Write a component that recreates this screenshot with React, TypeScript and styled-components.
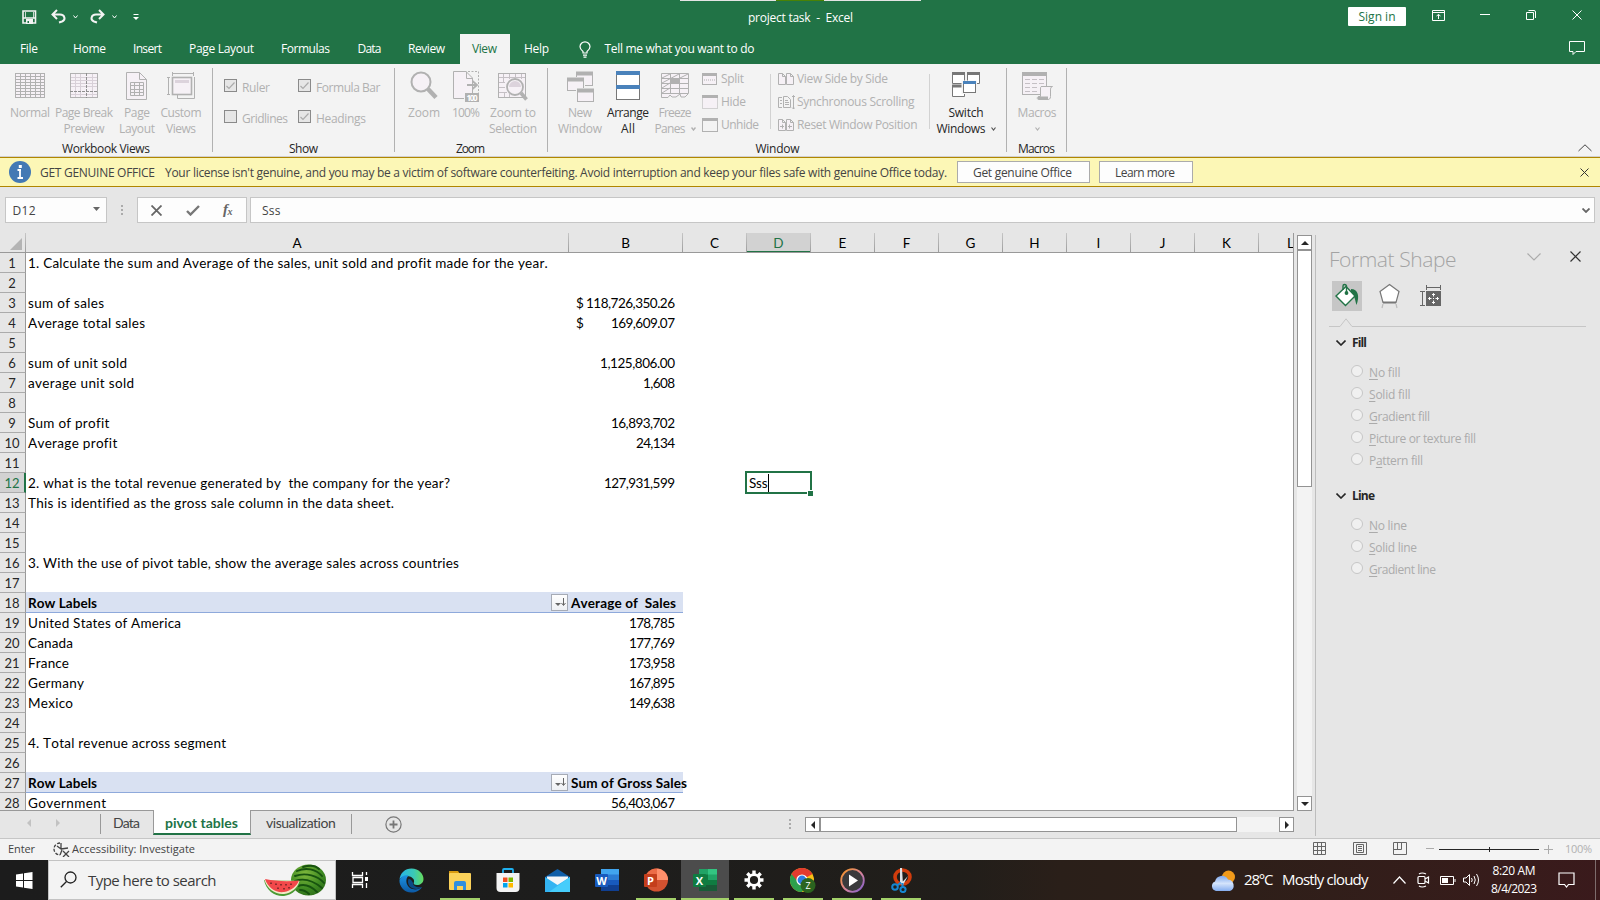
import React, { useLayoutEffect, useRef } from "react";
import styled, { createGlobalStyle, css } from "styled-components";

const GREEN = "#217346";
const UI = `"Open Sans", "Noto Sans", sans-serif`;
const CELL = `Lato, "Open Sans", sans-serif`;

const Global = createGlobalStyle`
  * { box-sizing: border-box; }
  body { margin: 0; background: #e6e6e6; font-family: ${UI}; font-size: 12px; color: #262626; overflow: hidden; }
  svg { display: block; flex: none; }
`;

/* ---------- text tracked to a fixed measure ---------- */
const Tracked = styled.span<{ $w: number; $ml?: number }>`
  display: block;
  flex: none;
  width: ${(p) => p.$w}px;
  margin-left: ${(p) => p.$ml ?? 0}px;
  white-space: pre;
`;

function Fit({ w, ml, children }: { w: number; ml?: number; children: React.ReactNode }) {
  const ref = useRef<HTMLSpanElement>(null);
  useLayoutEffect(() => {
    const el = ref.current;
    if (!el) return;
    const apply = () => {
      el.style.letterSpacing = "0px";
      const range = document.createRange();
      range.selectNodeContents(el);
      const natural = range.getBoundingClientRect().width;
      const n = (el.textContent || "").length;
      if (n > 1) el.style.letterSpacing = `${((w - natural) / (n - 1)).toFixed(3)}px`;
    };
    apply();
    document.fonts?.ready.then(apply);
  }, [w]);
  return (
    <Tracked ref={ref} $w={w} $ml={ml}>
      {children}
    </Tracked>
  );
}

/* ---------- frame ---------- */
const Frame = styled.div`
  width: 1600px;
  height: 900px;
  display: flex;
  flex-direction: column;
  overflow: hidden;
`;

const Slot = styled.div<{ $ml?: number; $mt?: number }>`
  flex: none;
  margin-left: ${(p) => p.$ml ?? 0}px;
  margin-top: ${(p) => p.$mt ?? 0}px;
`;

/* ---------- title bar and tabs ---------- */
const TitleBar = styled.header`
  height: 34px;
  flex: none;
  background: ${GREEN};
  color: #fff;
  display: flex;
  position: relative;
  line-height: 18px;
`;
const TopStrip = styled.div`
  position: absolute;
  left: 680px;
  top: 0;
  width: 241px;
  height: 1px;
  background: linear-gradient(to right, #e4e4e4 96px, #498205 96px, #498205 144px, #e4e4e4 144px);
`;
const SignIn = styled.button`
  width: 58px;
  height: 19px;
  margin: 7px 0 0 495px;
  padding: 1px 0 0 10.5px;
  border: 0;
  border-radius: 1px;
  background: #fff;
  color: ${GREEN};
  font: 12px/18px ${UI};
  text-align: left;
`;
const TabBar = styled.nav`
  height: 30px;
  flex: none;
  background: ${GREEN};
  color: #fff;
  display: flex;
  line-height: 30px;
`;
const Tab = styled.div<{ $w: number; $pad: number; $active?: boolean }>`
  width: ${(p) => p.$w}px;
  padding-left: ${(p) => p.$pad}px;
  background: ${(p) => (p.$active ? "#f3f3f3" : "transparent")};
  color: ${(p) => (p.$active ? GREEN : "#fff")};
`;

/* ---------- ribbon ---------- */
const Ribbon = styled.section`
  height: 93px;
  flex: none;
  display: flex;
  background: #f3f3f3;
  border-bottom: 1px solid #d2d0ce;
  position: relative;
`;
const Group = styled.div<{ $w: number }>`
  width: ${(p) => p.$w}px;
  height: 84px;
  margin-top: 4px;
  border-right: 1px solid #b1b1b1;
  display: flex;
  flex-direction: column;
  flex: none;
`;
const GroupBody = styled.div`
  height: 72px;
  display: flex;
  flex: none;
`;
const GroupName = styled.div<{ $ml: number }>`
  line-height: 17px;
  padding-left: ${(p) => p.$ml}px;
`;
const BigButton = styled.div<{ $w: number; $ml?: number; $on?: boolean }>`
  width: ${(p) => p.$w}px;
  margin-left: ${(p) => p.$ml ?? 0}px;
  padding-top: 1px;
  display: flex;
  flex-direction: column;
  align-items: center;
  flex: none;
  line-height: 16px;
  color: ${(p) => (p.$on ? "#262626" : "#b1b1b1")};
  > svg:first-child { margin-bottom: 1px; }
`;
const LabelLine = styled.div`
  display: flex;
  align-items: center;
  gap: 5px;
  height: 16px;
`;
const Column = styled.div<{ $w: number; $ml?: number; $mt?: number; $gap?: number }>`
  width: ${(p) => p.$w}px;
  margin-left: ${(p) => p.$ml ?? 0}px;
  margin-top: ${(p) => p.$mt ?? 0}px;
  display: flex;
  flex-direction: column;
  gap: ${(p) => p.$gap ?? 0}px;
  flex: none;
`;
const SmallCommand = styled.div<{ $gap: number }>`
  height: 16px;
  line-height: 16px;
  display: flex;
  align-items: center;
  gap: ${(p) => p.$gap}px;
  color: #b1b1b1;
`;
const CheckCommand = styled(SmallCommand)`
  align-items: flex-start;
  line-height: 19px;
`;
const CheckBox = styled.span`
  width: 13px;
  height: 13px;
  border: 1px solid #8a8a8a;
  background: #e6e6e6;
  flex: none;
  margin-top: 1px;
`;
const InnerRule = styled.div<{ $ml: number }>`
  width: 1px;
  height: 55px;
  margin: 6px 0 0 ${(p) => p.$ml}px;
  background: #d2d2d2;
  flex: none;
`;
const Collapse = styled.div`
  margin: 80px 0 0 511px;
`;

/* ---------- message bar ---------- */
const MessageBar = styled.section`
  height: 30px;
  flex: none;
  background: #fcf7b6;
  border: solid #b08600;
  border-width: 1px 0;
  display: flex;
  color: #444;
  line-height: 30px;
`;
const MessageButton = styled.button<{ $w: number; $ml: number; $pad: number }>`
  width: ${(p) => p.$w}px;
  height: 22px;
  margin: 3px 0 0 ${(p) => p.$ml}px;
  padding: 1px 0 0 ${(p) => p.$pad}px;
  border: 1px solid #ababab;
  background: #fdfdfd;
  color: #444;
  font: 12px/20px ${UI};
  text-align: left;
`;

/* ---------- formula bar ---------- */
const FormulaBar = styled.section`
  height: 46px;
  padding: 10px 0 0 5px;
  display: flex;
  flex: none;
`;
const Field = styled.div<{ $w: number; $ml?: number; $pad?: number }>`
  width: ${(p) => p.$w}px;
  height: 26px;
  margin-left: ${(p) => p.$ml ?? 0}px;
  padding-left: ${(p) => p.$pad ?? 0}px;
  border: 1px solid #c6c6c6;
  background: #fdfdfd;
  line-height: 25px;
  color: #444;
  display: flex;
  flex: none;
`;

/* ---------- workspace ---------- */
const Workspace = styled.main`
  height: 606px;
  display: flex;
  flex: none;
  border-bottom: 1px solid #c6c6c6;
`;
const BookArea = styled.div`
  width: 1316px;
  display: flex;
  flex-direction: column;
  flex: none;
`;
const SheetRow = styled.div`
  display: flex;
  height: 578px;
`;
const Sheet = styled.div`
  width: 1294px;
  border-right: 1px solid #999;
  border-bottom: 1px solid #999;
  background: #fff;
  display: flex;
  flex-direction: column;
  overflow: hidden;
  flex: none;
  font: 13.5px/20px ${CELL};
  font-kerning: none;
  color: #000;
`;
const ColumnHeads = styled.div`
  height: 20px;
  width: 1293px;
  background: #e6e6e6;
  border-bottom: 1px solid #999;
  display: flex;
  flex: none;
  overflow: hidden;
`;
const ColumnHead = styled.div<{ $w: number; $on?: boolean }>`
  width: ${(p) => p.$w}px;
  height: 20px;
  flex: none;
  text-align: center;
  line-height: 20px;
  border-right: 1px solid;
  border-image: linear-gradient(#c8c8c8, #999) 1;
  ${(p) =>
    p.$on &&
    css`
      background: #d2d2d2;
      color: ${GREEN};
      box-shadow: inset 0 -2px ${GREEN};
    `}
`;
const Line = styled.div`
  height: 20px;
  display: flex;
  flex: none;
`;
const RowHead = styled.div<{ $on?: boolean }>`
  width: 26px;
  height: 20px;
  flex: none;
  text-align: center;
  font-size: 13px;
  line-height: 21px;
  padding-right: ${(p) => (p.$on ? 0 : 1)}px;
  background: ${(p) => (p.$on ? "#d2d2d2" : "#e6e6e6")};
  color: ${(p) => (p.$on ? GREEN : "#262626")};
  border-right: ${(p) => (p.$on ? `2px solid ${GREEN}` : "1px solid #999")};
  border-bottom: 1px solid #ababab;
`;
const Cell = styled.div<{ $w: number; $head?: boolean; $right?: boolean }>`
  width: ${(p) => p.$w}px;
  height: 20px;
  flex: none;
  display: flex;
  line-height: 21px;
  justify-content: ${(p) => (p.$right ? "flex-end" : "flex-start")};
  padding: ${(p) => (p.$right ? "0 7px 0 0" : "0 0 0 2px")};
  font-variant-numeric: tabular-nums;
  ${(p) =>
    p.$head &&
    css`
      margin-top: -1px;
      padding-top: 1px;
      height: 21px;
      background: #d9e1f2;
      border-bottom: 1px solid #8ea9db;
      font-weight: 700;
    `}
`;
const SortButton = styled.div<{ $ml: number }>`
  width: 17px;
  height: 17px;
  margin: 1px 0 0 ${(p) => p.$ml}px;
  border: 1px solid #a6abb5;
  background: linear-gradient(#fefefe, #eef0f4);
`;
const EditCell = styled.div`
  position: relative;
  width: 67px;
  height: 23px;
  margin: -2px 0 0 63px;
  padding: 0 0 0 2px;
  border: 2px solid ${GREEN};
  background: #fff;
  display: flex;
  line-height: 21px;
`;
const Caret = styled.span`
  width: 1px;
  height: 18px;
  margin-top: 1px;
  background: #000;
`;
const FillHandle = styled.span`
  position: absolute;
  right: -3px;
  bottom: -4px;
  width: 6px;
  height: 6px;
  background: ${GREEN};
  border: solid #fff;
  border-width: 1px 0 0 1px;
`;
const VScroll = styled.div`
  width: 15px;
  height: 576px;
  margin: 2px 0 0 3px;
  background: #f3f3f3;
  display: flex;
  flex-direction: column;
  flex: none;
`;
const ScrollButton = styled.div`
  width: 15px;
  height: 15px;
  border: 1px solid #939393;
  background: #fff;
  flex: none;
  display: flex;
  align-items: center;
  justify-content: center;
`;
const VThumb = styled.div`
  height: 237px;
  margin-bottom: auto;
  border: 1px solid #939393;
  background: #fff;
`;
const PaneEdge = styled.div`
  width: 1px;
  height: 601px;
  margin: 2px 0 0 -1px;
  background: #bdbdbd;
  flex: none;
`;
const SheetTabs = styled.div`
  height: 27px;
  display: flex;
  flex: none;
  font: 14px/24px ${CELL};
  color: #444;
`;
const TabRule = styled.div<{ $ml: number }>`
  width: 1px;
  height: 20px;
  margin: 3px 0 0 ${(p) => p.$ml}px;
  background: #999;
  flex: none;
`;
const ActiveSheet = styled.div`
  width: 98px;
  height: 25px;
  margin: -1px 0 0 13px;
  padding-left: 11px;
  background: #fff;
  border: solid #999;
  border-width: 0 1px 0 1px;
  border-bottom: 2px solid ${GREEN};
  color: ${GREEN};
  font-weight: 700;
  line-height: 26px;
  flex: none;
`;
const HTrack = styled.div`
  width: 489px;
  height: 15px;
  margin: 6px 0 0 14px;
  background: #f3f3f3;
  display: flex;
  flex: none;
`;
const HThumb = styled.div`
  width: 417px;
  height: 15px;
  margin-right: auto;
  border: 1px solid #939393;
  background: #fff;
`;

/* ---------- format pane ---------- */
const Pane = styled.aside`
  width: 284px;
  display: flex;
  flex-direction: column;
  padding-left: 13px;
`;
const PaneTitle = styled.div`
  height: 48px;
  display: flex;
  font-size: 21px;
  font-weight: 300;
  line-height: 52px;
  color: #a3a3a3;
`;
const PaneTools = styled.div`
  display: flex;
  height: 30px;
  padding-left: 3px;
`;
const ToolBox = styled.div<{ $on?: boolean; $ml?: number }>`
  width: 30px;
  height: 30px;
  margin-left: ${(p) => p.$ml ?? 0}px;
  background: ${(p) => (p.$on ? "#c6c6c6" : "transparent")};
`;
const SectionHead = styled.div<{ $mt: number }>`
  display: flex;
  align-items: center;
  height: 16px;
  margin-top: ${(p) => p.$mt}px;
  padding-left: 7px;
  font-weight: 700;
  line-height: 16px;
`;
const Options = styled.div`
  margin-top: 12px;
  padding-left: 22px;
`;
const Option = styled.div`
  display: flex;
  height: 22px;
  line-height: 20px;
  color: #ababab;
  u { text-underline-offset: 2px; text-decoration-thickness: 1px; }
`;
const Radio = styled.span`
  width: 12px;
  height: 12px;
  margin-top: 2px;
  border: 1px solid #c6c6c6;
  border-radius: 50%;
  background: #f0f0f0;
`;

/* ---------- status bar ---------- */
const StatusBar = styled.footer`
  height: 21px;
  flex: none;
  background: #f3f3f3;
  display: flex;
  font-size: 11px;
  line-height: 20px;
  color: #444;
`;
const Faded = styled.span`
  color: #b1b1b1;
`;

/* ---------- taskbar ---------- */
const TaskBar = styled.div`
  height: 40px;
  flex: none;
  display: flex;
  background: linear-gradient(to right, #1c1c1c 0, #1d1d1c 600px, #211e1a 960px, #2a1f19 1060px, #2e1f19 1250px, #371c1b 1500px, #3a1a1c 1600px);
  color: #fff;
`;
const SearchBox = styled.div`
  width: 288px;
  height: 40px;
  border: 1px solid #c3c3c3;
  background: #f3f3f3;
  color: #3b3b3b;
  display: flex;
  font-size: 15px;
  line-height: 38px;
  flex: none;
`;
const TaskButton = styled.div<{ $w: number; $ml?: number; $line?: boolean; $on?: boolean }>`
  width: ${(p) => p.$w}px;
  height: 40px;
  margin-left: ${(p) => p.$ml ?? 0}px;
  display: flex;
  align-items: center;
  justify-content: center;
  flex: none;
  background: ${(p) => (p.$on ? "#4c4c4c" : "transparent")};
  box-shadow: ${(p) => (p.$line ? "inset 0 -2px #a3d16a" : "none")};
`;
const Weather = styled.div`
  display: flex;
  font-size: 15px;
  line-height: 39px;
`;
const Clock = styled.div`
  width: 48px;
  margin-left: 10px;
  padding-top: 2px;
  display: flex;
  flex-direction: column;
  align-items: center;
  line-height: 18px;
`;
const ShowDesktop = styled.div`
  width: 1px;
  height: 40px;
  margin-left: 20px;
  background: #7d6c6c;
`;

/* ---------- small icons ---------- */
type IcoProps = { w: number; h: number; c?: string; sw?: number; children: React.ReactNode };
const Ico = ({ w, h, c = "currentColor", sw = 1, children }: IcoProps) => (
  <svg width={w} height={h} viewBox={`0 0 ${w} ${h}`} fill="none" stroke={c} strokeWidth={sw}>
    {children}
  </svg>
);
const Cross = ({ s = 10, c = "currentColor", sw = 1 }: { s?: number; c?: string; sw?: number }) => (
  <Ico w={s} h={s} c={c} sw={sw}>
    <path d={`M.5 .5L${s - 0.5} ${s - 0.5}M${s - 0.5} .5L.5 ${s - 0.5}`} />
  </Ico>
);
const Chev = ({ w = 5, h = 3, c = "currentColor", sw = 1 }: { w?: number; h?: number; c?: string; sw?: number }) => (
  <Ico w={w} h={h + 1} c={c} sw={sw}>
    <path d={`M.5 .5L${w / 2} ${h}L${w - 0.5} .5`} />
  </Ico>
);
const Arrow = ({ dir, c = "#262626" }: { dir: "u" | "d" | "l" | "r"; c?: string }) => {
  const d = { u: "M4 2L8 6H0Z", d: "M0 2H8L4 6Z", l: "M2 4L6 0V8Z", r: "M6 4L2 0V8Z" }[dir];
  return (
    <svg width="8" height="8" viewBox="0 0 8 8">
      <path d={d} fill={c} />
    </svg>
  );
};

const G = "#b1b1b1";
const F = "#f6f1f6";

/* Ribbon drawings share a 32 x 35 canvas */
const Big = ({ children }: { children: React.ReactNode }) => (
  <svg width="32" height="35" viewBox="0 0 32 35" fill="none" stroke={G} strokeWidth="1">
    {children}
  </svg>
);
const NormalIcon = () => (
  <Big>
    <rect x="1.5" y="4.5" width="29" height="24" fill={F} />
    <path d="M6.5 4V28M11.5 4V28M16.5 4V28M21.5 4V28M26.5 4V28M1 7.5H30M1 10.5H30M1 13.5H30M1 16.5H30M1 19.5H30M1 22.5H30M1 25.5H30" />
  </Big>
);
const PageBreakIcon = () => (
  <Big>
    <rect x="2.5" y="4.5" width="27" height="24" fill={F} />
    <path stroke="#d8d0d8" d="M7.5 5V28M12.5 5V28M24.5 5V28M3 8.5H29M3 11.5H29M3 14.5H29M3 17.5H29M3 25.5H29" />
    <path stroke="#8f8f8f" strokeDasharray="3 1" d="M18.5 4V29M2 22.5H30" />
  </Big>
);
const PageLayoutIcon = () => (
  <Big>
    <path d="M5.5 3.5H18.5L25.5 10.5V30.5H5.5Z" fill={F} />
    <path d="M18.5 3.5V10.5H25.5M9.5 13.5H22.5V26.5H9.5ZM13.5 13.5V26.5M18.5 13.5V26.5M9.5 16.5H22.5M9.5 20.5H22.5M9.5 23.5H22.5" />
  </Big>
);
const CustomIcon = () => (
  <Big>
    <path d="M7.5 4.5H28.5M7.5 3V7M28.5 3V7M3.5 8.5V25.5M2 8.5H5M2 25.5H5M29.5 8V29.5H12.5V26" />
    <rect x="7.5" y="8.5" width="19" height="17" fill={F} strokeWidth="1.6" />
    <rect x="10" y="11" width="14" height="3" fill="#dcd3dc" stroke="none" />
  </Big>
);
const ZoomIcon = () => (
  <Big>
    <circle cx="13" cy="13" r="9.5" fill={F} strokeWidth="2" />
    <path d="M20 20L28 28.5" strokeWidth="4.5" />
  </Big>
);
const HundredIcon = () => (
  <Big>
    <path d="M14 29.5H3.5V2.5H16L22.5 9V24" fill={F} />
    <path d="M16.5 2.5V9.5H22.5" />
    <path d="M18 2.5H28.5V24" strokeDasharray="2 1.5" />
    <path d="M17 16H26M22.5 12L27 16L22.5 20" strokeWidth="1.8" />
    <rect x="15" y="24" width="14" height="9" fill={G} stroke="none" />
    <text x="16.5" y="31.5" fontSize="8" fontWeight="700" fill="#fff" stroke="none" textLength="11">100</text>
  </Big>
);
const ZoomSelIcon = () => (
  <Big>
    <rect x="1.5" y="4.5" width="27" height="24" fill={F} />
    <path d="M6.5 5V14M12.5 5V10M18.5 5V9M24.5 5V10M2 8.5H28M2 13.5H8M2 18.5H8M2 23.5H10M7.5 23V28M12.5 25V28" stroke="#c5c0c5" />
    <circle cx="18" cy="18" r="8" fill={F} strokeWidth="1.8" />
    <path d="M12 18A6 6 0 0 1 24 18Z" fill="#dcd3dc" stroke="none" />
    <path d="M24 24L29.5 30.5" strokeWidth="3.6" />
  </Big>
);
const NewWindowIcon = () => (
  <Big>
    <rect x="12.5" y="4.5" width="16" height="12" fill={F} />
    <path d="M12 4.5H29" strokeWidth="4" />
    <rect x="2" y="8" width="19" height="15" fill="#f3f3f3" stroke="none" />
    <rect x="3.5" y="9.5" width="16" height="12" fill={F} />
    <path d="M3 10.5H20" strokeWidth="4" />
    <rect x="12" y="19" width="19" height="14" fill="#f3f3f3" stroke="none" />
    <rect x="13.5" y="20.5" width="16" height="12" fill={F} />
    <path d="M13 21.5H30" strokeWidth="4" />
  </Big>
);
const ArrangeIcon = () => (
  <Big>
    <rect x="4.5" y="3.5" width="23" height="27" fill="#fff" stroke="#777" />
    <path d="M4 4H28M4 18H28" stroke="#4a82bb" strokeWidth="4" />
  </Big>
);
const FreezeIcon = () => (
  <Big>
    <path d="M2.5 4.5H29.5V24.5L26 28H22L21 25L17 28H13L11 26L9 28.5H2.5Z" fill={F} />
    <path d="M11.5 5V25M20.5 5V25M3 9.5H29M3 14.5H29M3 19.5H29M3 24.5H29M3 9L11 5M3 14L20 5M3 19L11 14M3 24L11 19M21 9L29 5" />
    <rect x="12" y="10" width="8" height="4" fill={G} stroke="none" />
  </Big>
);
const SwitchIcon = () => (
  <Big>
    <path d="M2.5 4.5H14.5V14.5H2.5ZM17.5 4.5H29.5V14.5H17.5ZM2.5 17.5H14.5V27.5H2.5Z" fill="#fff" stroke="#777" />
    <path d="M2 4.5H15M17 4.5H30M2 17H15" stroke="#777" strokeWidth="3" />
    <rect x="11.5" y="11.5" width="15.5" height="13.5" fill="#f3f3f3" stroke="none" />
    <rect x="13.5" y="13.5" width="12" height="10" fill="#fff" stroke="#777" />
    <path d="M13 13.5H26" stroke="#4a82bb" strokeWidth="3" />
  </Big>
);
const MacrosIcon = () => (
  <Big>
    <rect x="1.5" y="4.5" width="24" height="21" fill={F} />
    <path d="M1 5H26" strokeWidth="4" />
    <path d="M4 10.5H9M11 10.5H16M18 10.5H23M4 14.5H9M11 14.5H16M18 14.5H23M4 18.5H9M11 18.5H16M4 22.5H9M11 22.5H16" stroke="#c5c0c5" />
    <path d="M20 17.5H31.5C29.5 18 29.5 20 29.5 21V27.5C29.5 30 28 30.5 27 30.5H18C16 30.5 15.5 28.5 17.5 27.5H19.5V19C19.5 18 20 17.5 21 17.5" fill={F} />
    <path d="M17 29H27" strokeWidth="3" />
  </Big>
);

const PairIcon = ({ kind }: { kind: "view" | "sync" | "reset" }) => (
  <Ico w={17} h={15} c={G}>
    {kind === "sync" ? (
      <path d="M4 12.5H.5V2.5H4M5.5 1.5H9.5L12.5 4.5V12.5H5.5ZM7 5.5H10M7 7.5H11M7 9.5H11M2 5.5H4M2 8.5H4M15.5 .5V14M14 2L15.5 .5L17 2M14 12.5L15.5 14L17 12.5" />
    ) : (
      <>
        <path d="M.5 1.5H4.5L7.5 4.5V12.5H.5ZM8.5 1.5H12.5L15.5 4.5V12.5H8.5ZM4.5 1.5V4.5H7.5M12.5 1.5V4.5H15.5" fill={F} />
        {kind === "reset" && <path d="M2 8.5H6M10 8.5H14M4.5 6.5V10.5M11.5 6.5V10.5" />}
      </>
    )}
  </Ico>
);

/* ---------- sheet content ---------- */
type RowData = { a?: [string, number]; b?: [string, number]; cur?: boolean; head?: boolean };
const ROWS: RowData[] = [
  { a: ["1. Calculate the sum and Average of the sales, unit sold and profit made for the year.", 519.5] },
  {},
  { a: ["sum of sales", 76], b: ["118,726,350.26", 89], cur: true },
  { a: ["Average total sales", 117], b: ["169,609.07", 64], cur: true },
  {},
  { a: ["sum of unit sold", 99], b: ["1,125,806.00", 75] },
  { a: ["average unit sold", 106], b: ["1,608", 32] },
  {},
  { a: ["Sum of profit", 81], b: ["16,893,702", 64] },
  { a: ["Average profit", 89], b: ["24,134", 39] },
  {},
  { a: ["2. what is the total revenue generated by  the company for the year?", 422], b: ["127,931,599", 71] },
  { a: ["This is identified as the gross sale column in the data sheet.", 366] },
  {},
  {},
  { a: ["3. With the use of pivot table, show the average sales across countries", 431] },
  {},
  { a: ["Row Labels", 69], b: ["Average of  Sales", 105], head: true },
  { a: ["United States of America", 153], b: ["178,785", 46] },
  { a: ["Canada", 45], b: ["177,769", 46] },
  { a: ["France", 41], b: ["173,958", 46] },
  { a: ["Germany", 56], b: ["167,895", 46] },
  { a: ["Mexico", 45], b: ["149,638", 46] },
  {},
  { a: ["4. Total revenue across segment", 198] },
  {},
  { a: ["Row Labels", 69], b: ["Sum of Gross Sales", 116], head: true },
  { a: ["Government", 78], b: ["56,403,067", 64] },
];
const COLS: [string, number][] = [
  ["A", 543], ["B", 114], ["C", 64], ["D", 64], ["E", 64], ["F", 64],
  ["G", 64], ["H", 64], ["I", 64], ["J", 64], ["K", 64], ["L", 64],
];
const TABS: [string, number, number, number][] = [
  ["File", 53, 20, 18], ["Home", 60, 20, 33], ["Insert", 57, 20, 29], ["Page Layout", 91, 19, 65],
  ["Formulas", 77, 20, 49], ["Data", 51, 19.5, 24], ["Review", 71, 19, 37], ["View", 50, 12, 25], ["Help", 68, 14, 25],
];

function SheetLine({ row, n }: { row: RowData; n: number }) {
  const on = n === 12;
  return (
    <Line>
      <RowHead $on={on}>{n}</RowHead>
      {row.head ? (
        <>
          <Cell $w={543} $head>
            <Fit w={row.a![1]}>{row.a![0]}</Fit>
            <SortButton $ml={454}>
              <Ico w={15} h={15} c="#666">
                <path d="M11.5 3V10M9.5 8L11.5 10.5L13.5 8" />
                <path d="M3 8H9L6 11Z" fill="#666" stroke="none" />
              </Ico>
            </SortButton>
          </Cell>
          <Cell $w={114} $head>
            <Fit w={row.b![1]}>{row.b![0]}</Fit>
          </Cell>
        </>
      ) : (
        <>
          <Cell $w={543}>{row.a && <Fit w={row.a[1]}>{row.a[0]}</Fit>}</Cell>
          {row.b && (
            <Cell $w={113} $right>
              {row.cur && <Fit w={7}>$</Fit>}
              <Fit w={row.b[1]} ml={row.cur ? 92 - row.b[1] : 0}>{row.b[0]}</Fit>
            </Cell>
          )}
          {on && (
            <EditCell>
              <Fit w={18.5}>Sss</Fit>
              <Caret />
              <FillHandle />
            </EditCell>
          )}
        </>
      )}
    </Line>
  );
}

function Check({ on }: { on?: boolean }) {
  return (
    <CheckBox>
      {on && <Ico w={11} h={11} c="#ababab" sw={1.2}><path d="M1.5 6L4 8.5L9.5 2.5" /></Ico>}
    </CheckBox>
  );
}

function RibbonView() {
  return (
    <Ribbon>
      <Group $w={213}>
        <GroupBody>
          <BigButton $w={42} $ml={9}><NormalIcon /><Fit w={40}>Normal</Fit></BigButton>
          <BigButton $w={60} $ml={3}><PageBreakIcon /><Fit w={58}>Page Break</Fit><Fit w={41}>Preview</Fit></BigButton>
          <BigButton $w={40} $ml={3}><PageLayoutIcon /><Fit w={26}>Page</Fit><Fit w={36}>Layout</Fit></BigButton>
          <BigButton $w={44} $ml={2}><CustomIcon /><Fit w={41}>Custom</Fit><Fit w={30}>Views</Fit></BigButton>
        </GroupBody>
        <GroupName $ml={62}><Fit w={88}>Workbook Views</Fit></GroupName>
      </Group>
      <Group $w={182}>
        <GroupBody>
          <Column $w={74} $ml={11} $mt={10} $gap={15}>
            <CheckCommand $gap={5}><Check on /><Fit w={28}>Ruler</Fit></CheckCommand>
            <CheckCommand $gap={5}><Check /><Fit w={46}>Gridlines</Fit></CheckCommand>
          </Column>
          <Column $w={90} $mt={10} $gap={15}>
            <CheckCommand $gap={5}><Check on /><Fit w={64.5}>Formula Bar</Fit></CheckCommand>
            <CheckCommand $gap={5}><Check on /><Fit w={50}>Headings</Fit></CheckCommand>
          </Column>
        </GroupBody>
        <GroupName $ml={76}><Fit w={29}>Show</Fit></GroupName>
      </Group>
      <Group $w={153}>
        <GroupBody>
          <BigButton $w={36} $ml={11}><ZoomIcon /><Fit w={32}>Zoom</Fit></BigButton>
          <BigButton $w={36} $ml={6}><HundredIcon /><Fit w={28}>100%</Fit></BigButton>
          <BigButton $w={52} $ml={3}><ZoomSelIcon /><Fit w={46}>Zoom to</Fit><Fit w={48}>Selection</Fit></BigButton>
        </GroupBody>
        <GroupName $ml={61}><Fit w={29}>Zoom</Fit></GroupName>
      </Group>
      <Group $w={459}>
        <GroupBody>
          <BigButton $w={48} $ml={8}><NewWindowIcon /><Fit w={24}>New</Fit><Fit w={44}>Window</Fit></BigButton>
          <BigButton $w={44} $ml={2} $on><ArrangeIcon /><Fit w={42}>Arrange</Fit><Fit w={14}>All</Fit></BigButton>
          <BigButton $w={46} $ml={2}>
            <FreezeIcon /><Fit w={33}>Freeze</Fit>
            <LabelLine><Fit w={31}>Panes</Fit><Chev c={G} sw={1.4} /></LabelLine>
          </BigButton>
          <Column $w={64} $ml={4} $mt={3} $gap={7}>
            <SmallCommand $gap={3}>
              <Ico w={16} h={13} c={G}><rect x=".5" y=".5" width="14" height="11" fill={F} /><path d="M0 1.5H15" strokeWidth="3" /><path d="M2 7H13" strokeDasharray="1 1" /></Ico>
              <Fit w={23}>Split</Fit>
            </SmallCommand>
            <SmallCommand $gap={3}>
              <Ico w={16} h={15} c={G}><rect x=".5" y=".5" width="15" height="13" fill={F} strokeDasharray="1 1" /><path d="M0 1.5H16" strokeWidth="3" /></Ico>
              <Fit w={25}>Hide</Fit>
            </SmallCommand>
            <SmallCommand $gap={3}>
              <Ico w={16} h={14} c={G}><rect x=".5" y=".5" width="15" height="13" fill="#f3f3f3" /><path d="M0 1.5H16" strokeWidth="3" /></Ico>
              <Fit w={38}>Unhide</Fit>
            </SmallCommand>
          </Column>
          <InnerRule $ml={4} />
          <Column $w={150} $ml={7} $mt={3} $gap={7}>
            <SmallCommand $gap={2}><PairIcon kind="view" /><Fit w={91}>View Side by Side</Fit></SmallCommand>
            <SmallCommand $gap={2}><PairIcon kind="sync" /><Fit w={117.5}>Synchronous Scrolling</Fit></SmallCommand>
            <SmallCommand $gap={2}><PairIcon kind="reset" /><Fit w={120.5}>Reset Window Position</Fit></SmallCommand>
          </Column>
          <InnerRule $ml={1} />
          <BigButton $w={68} $ml={2} $on>
            <SwitchIcon /><Fit w={35}>Switch</Fit>
            <LabelLine><Fit w={49}>Windows</Fit><Chev c="#555" sw={1.2} /></LabelLine>
          </BigButton>
        </GroupBody>
        <GroupName $ml={207.5}><Fit w={44}>Window</Fit></GroupName>
      </Group>
      <Group $w={60}>
        <GroupBody>
          <BigButton $w={60}><MacrosIcon /><Fit w={39}>Macros</Fit><LabelLine><Chev c={G} sw={1.2} /></LabelLine></BigButton>
        </GroupBody>
        <GroupName $ml={11}><Fit w={37}>Macros</Fit></GroupName>
      </Group>
      <Collapse><Ico w={14} h={8} c="#444"><path d="M.5 7L7 .8L13.5 7" /></Ico></Collapse>
    </Ribbon>
  );
}

function FormatPane() {
  const fill = [["", "N", "o fill", 31.5], ["", "S", "olid fill", 41.5], ["", "G", "radient fill", 61], ["", "P", "icture or texture fill", 107], ["P", "a", "ttern fill", 54]] as const;
  const line = [["", "N", "o line", 38], ["", "S", "olid line", 48], ["", "G", "radient line", 67]] as const;
  const render = (o: readonly [string, string, string, number]) => (
    <Option key={o[1] + o[2]}>
      <Radio />
      <Fit w={o[3]} ml={6}>{o[0]}<u>{o[1]}</u>{o[2]}</Fit>
    </Option>
  );
  return (
    <Pane>
      <PaneTitle>
        <Fit w={127.5}>Format Shape</Fit>
        <Slot $ml={70.5} $mt={20}><Chev w={14} h={7} c="#ababab" sw={1.2} /></Slot>
        <Slot $ml={29} $mt={18}><Cross s={11} c="#333" sw={1.2} /></Slot>
      </PaneTitle>
      <PaneTools>
        <ToolBox $on>
          <Ico w={30} h={30} c={GREEN} sw={1.4}>
            <path d="M19 8C26 8 28 15 24.5 24C23 19 23 15 19 12Z" fill={GREEN} stroke="none" />
            <path d="M14 5.5L23 15L13.5 24.5L4 15Z" fill="#fff" />
            <path d="M11 9V5C11 3 14 3 14.5 5V11" />
            <circle cx="14.5" cy="12" r="1.2" fill={GREEN} />
          </Ico>
        </ToolBox>
        <ToolBox $ml={10}>
          <Ico w={30} h={30} c="#777" sw={1.2}>
            <path d="M17.5 3.5L27 10.5L24 21.5H11L8 10.5Z" fill="#fff" />
            <path d="M11 21.5H24" strokeWidth="2" />
            <path d="M11 23L10 27M24 23L25 27" stroke="#bbb" />
          </Ico>
        </ToolBox>
        <ToolBox $ml={14}>
          <Ico w={30} h={30} c="#666">
            <path d="M10.5 6.5H24.5M10.5 4V9M24.5 4V9M6.5 10.5V24.5M4 10.5H9M4 24.5H9" />
            <rect x="10.5" y="10.5" width="14" height="14" fill="#666" />
            <path d="M12.5 17.5H15.5M19.5 17.5H22.5M17.5 12.5V15.5M17.5 19.5V22.5M14 16L12.5 17.5L14 19M21 16L22.5 17.5L21 19M16 14L17.5 12.5L19 14M16 21L17.5 22.5L19 21M17 17.5H18" stroke="#fff" />
          </Ico>
        </ToolBox>
      </PaneTools>
      <Slot $mt={7}><Ico w={257} h={9} c="#c6c6c6"><path d="M0 8.5H11L17 .8L23 8.5H257" /></Ico></Slot>
      <SectionHead $mt={8}><Chev w={10} h={5} sw={1.6} /><Fit w={15} ml={6}>Fill</Fit></SectionHead>
      <Options>{fill.map(render)}</Options>
      <SectionHead $mt={15}><Chev w={10} h={5} sw={1.6} /><Fit w={23} ml={6}>Line</Fit></SectionHead>
      <Options>{line.map(render)}</Options>
    </Pane>
  );
}

const OfficeTile = ({ letter, color, children }: { letter: string; color: string; children: React.ReactNode }) => (
  <svg width="24" height="24" viewBox="0 0 24 24">
    {children}
    <rect x="0" y="6" width="13" height="13" rx="1" fill={color} />
    <text x="6.5" y="16.5" fontSize="11" fontWeight="700" textAnchor="middle" fill="#fff">{letter}</text>
  </svg>
);

function Taskbar() {
  return (
    <TaskBar>
      <TaskButton $w={48}>
        <svg width="17" height="17" viewBox="0 0 17 17" fill="#fff"><path d="M0 2.5L7 1.5V8H0ZM8 1.3L16.5 0V8H8ZM0 9H7V15.5L0 14.5ZM8 9H16.5V17L8 15.7Z" /></svg>
      </TaskButton>
      <SearchBox>
        <Slot $ml={11} $mt={10}><Ico w={17} h={17} c="#222" sw={1.3}><circle cx="10.5" cy="6.5" r="5.5" /><path d="M6.5 10.5L.8 16.2" /></Ico></Slot>
        <Fit w={128.5} ml={11}>Type here to search</Fit>
        <Slot $ml={47.5} $mt={3}>
          <svg width="63" height="34" viewBox="0 0 63 34">
            <defs><radialGradient id="mel" cx=".4" cy=".3" r=".8"><stop offset="0" stopColor="#7fb83c" /><stop offset=".6" stopColor="#3f8a22" /><stop offset="1" stopColor="#2c6a18" /></radialGradient></defs>
            <ellipse cx="44.5" cy="16" rx="17.5" ry="15.5" fill="url(#mel)" />
            <path d="M33 7C42 3 52 5 58 12M31 12C42 8 54 12 60 19M31 17C42 13 52 19 58 24M34 22C42 19 48 23 53 28M39 3C46 1 52 2 55 5M36 26C40 26 43 28 45 30" stroke="#17530f" strokeWidth="1.9" fill="none" strokeLinecap="round" />
            <path d="M0 16C2 27 12 33 20 32C29 31 35 24 36 17Z" fill="#4b9b35" />
            <path d="M.5 16C3 25 12 31 20 30C28 29 34 23 35.5 17Z" fill="#f4e9c8" />
            <path d="M1 15C4 24 12 29 20 28C27 27 33 22 35 16.5C22 18 12 17 1 15Z" fill="#f2484a" />
            <path d="M7 18.5V20M12 19.5V21M17 20V21.5M22 20V21.5M27 19.5V21M14 23.5V25M20 24V25.5M25 23V24.5" stroke="#3a1414" strokeWidth="1.1" />
          </svg>
        </Slot>
      </SearchBox>
      <TaskButton $w={20} $ml={14}>
        <Ico w={18} h={16} c="#fff" sw={1.3}><path d="M1.5 0V3.5H11.5V0M1.5 16V12.5H11.5V16M2 5.5H11.5V10.5H2ZM15.5 0V3M15.5 11V16" /><rect x="14" y="5" width="3" height="4" fill="#fff" stroke="none" /></Ico>
      </TaskButton>
      <TaskButton $w={40} $ml={21}>
        <svg width="25" height="25" viewBox="0 0 25 25">
          <defs>
            <linearGradient id="e1" x1="0" x2="1"><stop offset="0" stopColor="#25b5ea" /><stop offset=".6" stopColor="#3bc9b4" /><stop offset="1" stopColor="#66dc5c" /></linearGradient>
            <linearGradient id="e2" x1="0" y1="0" x2="0" y2="1"><stop offset="0" stopColor="#1c93e4" /><stop offset="1" stopColor="#0c59a4" /></linearGradient>
          </defs>
          <path d="M.5 12C1 5 6 .5 12.5 .5C20 .5 24.5 6 24.5 11C24.5 15 21 17 18 17C15 17 14 16 15 14C16 11 12 8 8 8C4 8 1 10 .5 12Z" fill="url(#e1)" />
          <path d="M.5 12C2 8 6 6.5 9.5 7.5C6 11 7 17 11 20C15 22.5 20 21.5 23 19C21 22.5 17 24.5 12.5 24.5C5 24.5 0 18 .5 12Z" fill="url(#e2)" />
          <path d="M9.5 11C8 15 10 19 14 20.5C18 21.5 21 20.5 23 19C18 20 14 18 14 15C13 13 12 11 9.5 11Z" fill="#0b4a86" />
        </svg>
      </TaskButton>
      <TaskButton $w={40} $ml={9} $line>
        <svg width="22" height="19" viewBox="0 0 22 19"><path d="M0 0H9L11 3H0Z" fill="#d99b10" /><rect y="2" width="22" height="17" rx="1" fill="#fbd25a" /><path d="M5 19V12Q5 10 7 10H15Q17 10 17 12V19H14V15H8V19Z" fill="#2f8fe0" /></svg>
      </TaskButton>
      <TaskButton $w={40} $ml={8}>
        <svg width="24" height="24" viewBox="0 0 24 24"><path d="M7 7V2Q7 1 8 1H16Q17 1 17 2V7" fill="none" stroke="#1fb1f0" strokeWidth="1.8" /><path d="M.5 5H23.5V20Q23.5 24 19.5 24H4.5Q.5 24 .5 20Z" fill="#f4f4f4" /><rect x="7" y="9.5" width="4.5" height="4.5" fill="#f25022" /><rect x="12.5" y="9.5" width="4.5" height="4.5" fill="#7fba00" /><rect x="7" y="15" width="4.5" height="4.5" fill="#00a4ef" /><rect x="12.5" y="15" width="4.5" height="4.5" fill="#ffb900" /></svg>
      </TaskButton>
      <TaskButton $w={40} $ml={9}>
        <svg width="25" height="23" viewBox="0 0 25 23"><path d="M0 8L12.5 0L25 8V14H0Z" fill="#0f5ea8" /><path d="M2 7.5H23V13L12.5 17L2 13Z" fill="#f4f6f8" /><path d="M0 8L12.5 16L25 8V23H0Z" fill="#33b4f2" /><path d="M25 8L4 23H25Z" fill="#46cdfb" /></svg>
      </TaskButton>
      <TaskButton $w={40} $ml={10}>
        <OfficeTile letter="W" color="#185abd"><rect x="6" y="1" width="18" height="6" fill="#41a5ee" /><rect x="6" y="6.5" width="18" height="6" fill="#2b7cd3" /><rect x="6" y="12" width="18" height="6" fill="#185abd" /><rect x="6" y="17" width="18" height="6" fill="#103f91" /></OfficeTile>
      </TaskButton>
      <TaskButton $w={40} $ml={9} $line>
        <OfficeTile letter="P" color="#c43e1c"><circle cx="12.5" cy="12" r="11.5" fill="#d35230" /><path d="M12.5 .5A11.5 11.5 0 0 1 24 12H12.5Z" fill="#ff8f6b" /><path d="M12.5 .5A11.5 11.5 0 0 0 1 12H12.5Z" fill="#ed6c47" /></OfficeTile>
      </TaskButton>
      <TaskButton $w={48} $ml={5} $line $on>
        <OfficeTile letter="X" color="#107c41"><rect x="6" y="1" width="9" height="6" fill="#21a366" /><rect x="15" y="1" width="9" height="6" fill="#33c481" /><rect x="6" y="6.5" width="9" height="6" fill="#107c41" /><rect x="15" y="6.5" width="9" height="6" fill="#21a366" /><rect x="6" y="12" width="18" height="6" fill="#107c41" /><rect x="6" y="17" width="18" height="6" fill="#185c37" /></OfficeTile>
      </TaskButton>
      <TaskButton $w={40} $ml={5} $line>
        <svg width="20" height="20" viewBox="0 0 20 20"><g stroke="#fff" strokeWidth="3.4"><path d="M10 .5V5M10 15V19.5M.5 10H5M15 10H19.5M3.3 3.3L6 6M14 14L16.7 16.7M16.7 3.3L14 6M6 14L3.3 16.7" /></g><circle cx="10" cy="10" r="5.4" fill="none" stroke="#fff" strokeWidth="2.6" /></svg>
      </TaskButton>
      <TaskButton $w={40} $ml={9} $line>
        <svg width="26" height="25" viewBox="0 0 26 25"><circle cx="12" cy="12" r="12" fill="#fbc116" /><path d="M12 12L1.6 6A12 12 0 0 1 22.4 6Z" fill="#e33b2e" /><path d="M12 12L1.6 6A12 12 0 0 0 12 24L16 17Z" fill="#2da04c" /><path d="M1.6 6L8 14L12 6Z" fill="#e33b2e" /><circle cx="12" cy="12" r="5.6" fill="#fff" /><circle cx="12" cy="12" r="4.4" fill="#2f7de1" /><circle cx="18" cy="17.5" r="7.5" fill="#2b641f" /><text x="18" y="21" fontSize="9" textAnchor="middle" fill="#fff">Z</text></svg>
      </TaskButton>
      <TaskButton $w={40} $ml={9} $line>
        <svg width="25" height="25" viewBox="0 0 25 25"><defs><linearGradient id="mp" x1="0" y1="0" x2="1" y2="1"><stop offset="0" stopColor="#f7941d" /><stop offset=".55" stopColor="#d583a0" /><stop offset="1" stopColor="#7a5bd0" /></linearGradient></defs><circle cx="12.5" cy="12.5" r="11.3" fill="#3a3a3c" stroke="url(#mp)" strokeWidth="1.8" /><path d="M9 6.5L18 12.5L9 18.5Z" fill="#fff" /></svg>
      </TaskButton>
      <TaskButton $w={40} $ml={9} $line>
        <svg width="21" height="25" viewBox="0 0 21 25"><ellipse cx="11.5" cy="9" rx="7.5" ry="7" fill="none" stroke="#d23c0c" strokeWidth="3.6" /><path d="M9 0L11 0L12 17L9 15ZM17 8L12 17L9.5 16Z" fill="#dfe3e6" /><circle cx="4" cy="19" r="2.8" fill="none" stroke="#1686d0" strokeWidth="2" /><circle cx="12" cy="21.5" r="2.6" fill="none" stroke="#1686d0" strokeWidth="2" /><path d="M6 17.5L10 14.5M11.5 19V15" stroke="#1686d0" strokeWidth="2" /></svg>
      </TaskButton>
      <Weather>
        <Slot $ml={290} $mt={10}>
          <svg width="25" height="22" viewBox="0 0 25 22"><defs><linearGradient id="cl" x1="0" y1="0" x2="0" y2="1"><stop offset="0" stopColor="#7fa9ee" /><stop offset=".5" stopColor="#d5e4fb" /><stop offset="1" stopColor="#86aef0" /></linearGradient></defs><circle cx="17.5" cy="7" r="6.5" fill="#f19a1a" /><path d="M5 21A5 5 0 0 1 4 11.5A7 7 0 0 1 17 9.5A6 6 0 0 1 19 21Z" fill="url(#cl)" /></svg>
        </Slot>
        <Fit w={29.5} ml={8}>28°C</Fit>
        <Fit w={86.5} ml={8.5}>Mostly cloudy</Fit>
      </Weather>
      <Slot $ml={24.5} $mt={16}><Ico w={13} h={8} c="#fff" sw={1.2}><path d="M.5 7.5L6.5 1L12.5 7.5" /></Ico></Slot>
      <Slot $ml={11} $mt={12}><Ico w={13} h={16} c="#fff" sw={1.2}><rect x="1" y="4.5" width="7" height="7" rx="1" /><path d="M8 7L11.5 5V11L8 9M2 2Q5 0 9 2M2 14Q5 16 9 14" /></Ico></Slot>
      <Slot $ml={10} $mt={16}><Ico w={16} h={9} c="#fff"><path d="M.5 .5H13.5V8.5H.5ZM15 3V6" /><rect x="2" y="2" width="6" height="5" fill="#fff" stroke="none" /></Ico></Slot>
      <Slot $ml={7} $mt={13}><Ico w={17} h={14} c="#fff"><path d="M.5 5H3L6.5 1.5V12.5L3 9H.5ZM8.5 5Q10 7 8.5 9M11 3Q13.5 7 11 11M13.5 1Q17.5 7 13.5 13" /></Ico></Slot>
      <Clock><Fit w={43}>8:20 AM</Fit><Fit w={46}>8/4/2023</Fit></Clock>
      <Slot $ml={20} $mt={12}><Ico w={17} h={16} c="#fff" sw={1.2}><path d="M1 1H16V12.5H10.5L8.5 15L6.5 12.5H1Z" /></Ico></Slot>
      <ShowDesktop />
    </TaskBar>
  );
}

export default function App() {
  return (
    <Frame>
      <Global />
      <TitleBar>
        <TopStrip />
        <Slot $ml={22} $mt={10}>
          <Ico w={15} h={14} c="#f3f3f3" sw={1.6}><path d="M1 1H13.5V13H1ZM1 8H13.5" /><path d="M3.5 8V2M11.5 8V2" strokeWidth=".8" /><rect x="4" y="9" width="7" height="5" fill="#f3f3f3" stroke="none" /><rect x="5.5" y="11" width="1.5" height="2" fill={GREEN} stroke="none" /></Ico>
        </Slot>
        <Slot $ml={14} $mt={9}>
          <Ico w={15} h={15} c="#f3f3f3" sw={2}><path d="M1.5 5.5H9C14 5.5 15 11 11 12.5L8 13.5M6 1L1.5 5.5L6 10" /></Ico>
        </Slot>
        <Slot $ml={6.5} $mt={15}><Chev /></Slot>
        <Slot $ml={12} $mt={9}>
          <Ico w={15} h={15} c="#f3f3f3" sw={2}><path d="M13.5 5.5H6C1 5.5 0 11 4 12.5L7 13.5M9 1L13.5 5.5L9 10" /></Ico>
        </Slot>
        <Slot $ml={7} $mt={15}><Chev /></Slot>
        <Slot $ml={16} $mt={14}><Ico w={6} h={7} c="#fff"><path d="M.5 .5H5.5" /><path d="M0 3H6L3 6Z" fill="#fff" stroke="none" /></Ico></Slot>
        <Slot $ml={609.5} $mt={9}><Fit w={105}>project task  -  Excel</Fit></Slot>
        <SignIn><Fit w={37}>Sign in</Fit></SignIn>
        <Slot $ml={26} $mt={10}><Ico w={13} h={11} c="#fff"><path d="M.5 .5H12.5V10.5H.5ZM.5 2.5H12.5M6.5 9V4.5M4.5 6L6.5 4.5L8.5 6" /></Ico></Slot>
        <Slot $ml={35} $mt={14}><Ico w={10} h={1} c="#fff"><path d="M0 .5H10" /></Ico></Slot>
        <Slot $ml={36} $mt={10}><Ico w={10} h={11} c="#fff"><path d="M.5 2.5H7.5V9.5H.5ZM2.5 .5H8Q9.5 .5 9.5 2V8" /></Ico></Slot>
        <Slot $ml={36} $mt={10}><Cross s={10} /></Slot>
      </TitleBar>
      <TabBar>
        {TABS.map(([name, w, pad, tw]) => (
          <Tab key={name} $w={w} $pad={pad} $active={name === "View"}><Fit w={tw}>{name}</Fit></Tab>
        ))}
        <Slot $ml={0.5} $mt={7}>
          <Ico w={12} h={17} c="#fff" sw={1.2}><path d="M4 12V10.5C2 9 1 7.5 1 5.8A5 5 0 0 1 11 5.8C11 7.5 10 9 8 10.5V12ZM4 14.2H8M4.5 16.2H7.5" /></Ico>
        </Slot>
        <Fit w={150} ml={14}>Tell me what you want to do</Fit>
        <Slot $ml={814.5} $mt={7}><Ico w={17} h={15} c="#fff"><path d="M.5 .5H15.5V10.5H7L4 13.5V10.5H.5Z" /></Ico></Slot>
      </TabBar>
      <RibbonView />
      <MessageBar>
        <Slot $ml={9} $mt={3}>
          <svg width="22" height="22" viewBox="0 0 22 22"><circle cx="11" cy="11" r="11" fill="#4379b4" /><path d="M11 9V17M8.5 9H12M8.5 17H14" stroke="#fff" strokeWidth="1.8" /><rect x="9.8" y="4" width="3" height="3" fill="#fff" /></svg>
        </Slot>
        <Fit w={115} ml={9}>GET GENUINE OFFICE</Fit>
        <Fit w={782} ml={10}>Your license isn't genuine, and you may be a victim of software counterfeiting. Avoid interruption and keep your files safe with genuine Office today.</Fit>
        <MessageButton $w={133} $ml={10} $pad={15}><Fit w={99}>Get genuine Office</Fit></MessageButton>
        <MessageButton $w={94} $ml={9} $pad={15}><Fit w={60}>Learn more</Fit></MessageButton>
        <Slot $ml={387} $mt={10}><Cross s={9} c="#333" sw={1} /></Slot>
      </MessageBar>
      <FormulaBar>
        <Field $w={102} $pad={6.5}><Fit w={23}>D12</Fit><Slot $ml={57} $mt={9}><svg width="8" height="5" viewBox="0 0 8 5"><path d="M0 0H7L3.5 4Z" fill="#666" /></svg></Slot></Field>
        <Slot $ml={14} $mt={8}><Ico w={2} h={11} c="#ababab" sw={2}><path d="M1 0V2M1 4V6M1 8V10" /></Ico></Slot>
        <Field $w={110} $ml={14}>
          <Slot $ml={12.5} $mt={7}><Cross s={11} c="#666" sw={1.8} /></Slot>
          <Slot $ml={24} $mt={7}><Ico w={14} h={11} c="#777" sw={2.4}><path d="M1 6L4.5 9.5L13 1" /></Ico></Slot>
          <Slot $ml={22.5} $mt={4}>
            <svg width="14" height="16" viewBox="0 0 14 16" fill="#666" fontFamily="Liberation Serif, serif" fontStyle="italic" fontWeight="700"><text x="1" y="12" fontSize="15">f</text><text x="5.5" y="12.5" fontSize="10">x</text></svg>
          </Slot>
        </Field>
        <Field $w={1345} $ml={3} $pad={11}><Fit w={18.5}>Sss</Fit><Slot $ml={1301.5} $mt={10}><Chev w={8} h={4} c="#666" sw={1.8} /></Slot></Field>
      </FormulaBar>
      <Workspace>
        <BookArea>
          <SheetRow>
            <Sheet>
              <ColumnHeads>
                <ColumnHead $w={26}><Slot $ml={10} $mt={5}><svg width="12" height="12" viewBox="0 0 12 12"><path d="M12 0V12H0Z" fill="#b4b4b4" /></svg></Slot></ColumnHead>
                {COLS.map(([c, w]) => <ColumnHead key={c} $w={w} $on={c === "D"}>{c}</ColumnHead>)}
              </ColumnHeads>
              {ROWS.map((r, i) => <SheetLine key={i} row={r} n={i + 1} />)}
            </Sheet>
            <VScroll>
              <ScrollButton><Arrow dir="u" /></ScrollButton>
              <VThumb />
              <ScrollButton><Arrow dir="d" /></ScrollButton>
            </VScroll>
          </SheetRow>
          <SheetTabs>
            <Slot $ml={25} $mt={8}><Arrow dir="l" c="#c2c2c2" /></Slot>
            <Slot $ml={21} $mt={8}><Arrow dir="r" c="#c2c2c2" /></Slot>
            <TabRule $ml={38} />
            <Fit w={27} ml={12}>Data</Fit>
            <ActiveSheet><Fit w={73}>pivot tables</Fit></ActiveSheet>
            <Fit w={70} ml={15}>visualization</Fit>
            <TabRule $ml={15} />
            <Slot $ml={32.5} $mt={5}><Ico w={17} h={17} c="#777" sw={1.2}><circle cx="8.5" cy="8.5" r="7.6" /><path d="M8.5 4.5V12.5M4.5 8.5H12.5" strokeWidth="1.8" /></Ico></Slot>
            <Slot $ml={387.5} $mt={8}><Ico w={2} h={11} c="#ababab" sw={2}><path d="M1 0V2M1 4V6M1 8V10" /></Ico></Slot>
            <HTrack>
              <ScrollButton><Arrow dir="l" /></ScrollButton>
              <HThumb />
              <ScrollButton><Arrow dir="r" /></ScrollButton>
            </HTrack>
          </SheetTabs>
        </BookArea>
        <PaneEdge />
        <FormatPane />
      </Workspace>
      <StatusBar>
        <Fit w={27} ml={8}>Enter</Fit>
        <Slot $ml={18} $mt={3}><Ico w={17} h={15} c="#444" sw={1.3}><path d="M7 1A6 6 0 0 0 7 13" strokeDasharray="3 1.5" /><path d="M4 4L8 7V1M8 7L15 6M9 8L7 13M10 9L16 15M16 9L10 15" /></Ico></Slot>
        <Fit w={123} ml={2}>Accessibility: Investigate</Fit>
        <Slot $ml={1118} $mt={3}><Ico w={13} h={13} c="#666"><path d="M.5 .5H12.5V12.5H.5ZM4.5 .5V12.5M8.5 .5V12.5M.5 4.5H12.5M.5 8.5H12.5" /></Ico></Slot>
        <Slot $ml={27} $mt={3}><Ico w={14} h={13} c="#666"><path d="M.5 .5H13.5V12.5H.5ZM3.5 2.5H10.5V10.5H3.5ZM5 4.5H9M5 6.5H9M5 8.5H9" /></Ico></Slot>
        <Slot $ml={26} $mt={3}><Ico w={14} h={13} c="#666"><path d="M.5 .5H13.5V12.5H.5ZM4.5 .5V7.5M.5 7.5H8.5V.5" /></Ico></Slot>
        <Slot $ml={19} $mt={9}><Ico w={8} h={1} c="#ababab"><path d="M0 .5H8" /></Ico></Slot>
        <Slot $ml={5} $mt={8}><Ico w={100} h={5} c="#262626"><path d="M0 2.5H100M50.5 0V5" /></Ico></Slot>
        <Slot $ml={4.5} $mt={6}><Ico w={9} h={9} c="#ababab"><path d="M0 4.5H9M4.5 0V9" /></Ico></Slot>
        <Faded><Fit w={27} ml={12.5}>100%</Fit></Faded>
      </StatusBar>
      <Taskbar />
    </Frame>
  );
}
